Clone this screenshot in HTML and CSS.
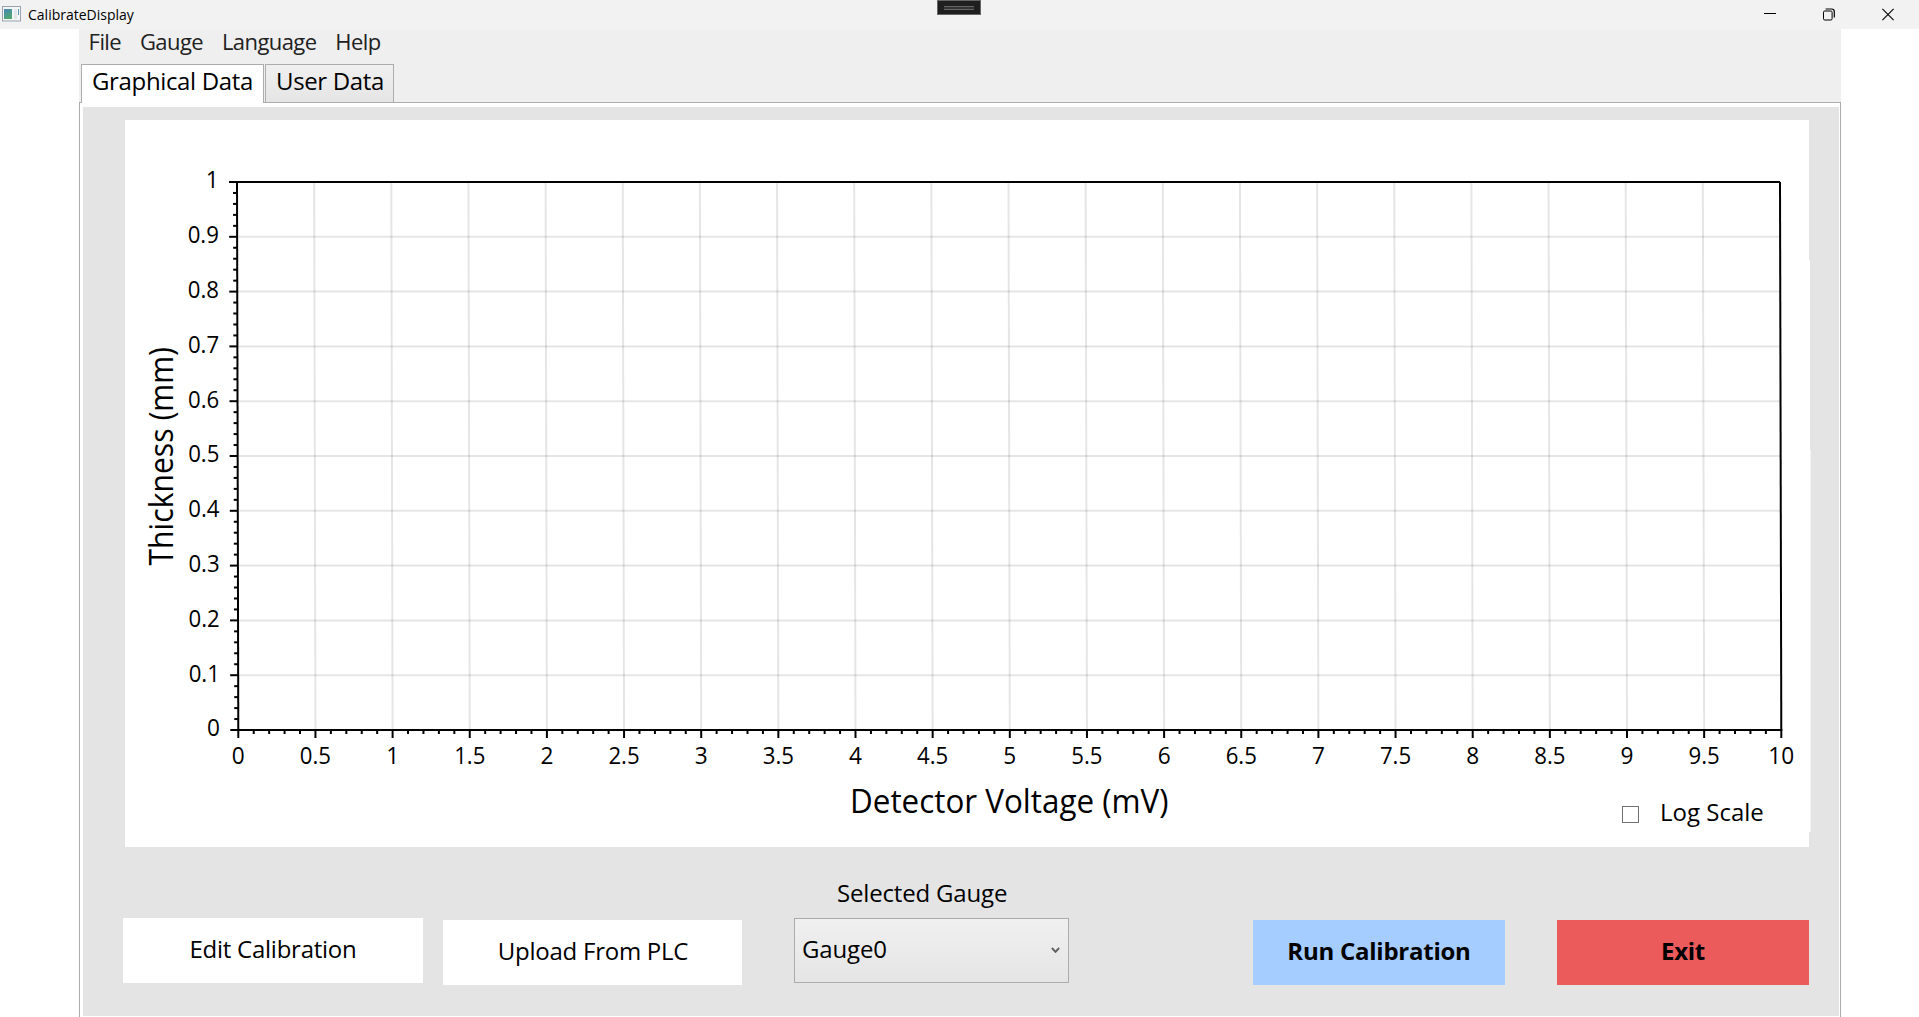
FILE: index.html
```html
<!DOCTYPE html>
<html lang="en">
<head>
<meta charset="utf-8">
<title>CalibrateDisplay</title>
<link rel="stylesheet" href="styles.css">
</head>
<body>
<header class="titlebar">
  <svg class="app-icon" width="19" height="16" viewBox="0 0 19 16">
    <defs><linearGradient id="pane" x1="0" y1="0" x2="0.4" y2="1"><stop offset="0" stop-color="#4a86b8"/><stop offset="1" stop-color="#4fa870"/></linearGradient></defs>
    <rect x="0.5" y="0.5" width="18" height="14.5" fill="#f4f5f6" stroke="#9aa3ab"/>
    <rect x="2" y="3" width="8" height="10" fill="url(#pane)"/>
    <rect x="12" y="3" width="3" height="10" fill="#e3e7ea"/>
    <rect x="16" y="3" width="1" height="6" fill="#5b97b5"/>
  </svg>
  <span class="app-title">CalibrateDisplay</span>
  <div class="window-buttons">
    <svg width="12" height="13" viewBox="0 0 12 13"><path d="M0 5.5H12" stroke="#000"/></svg>
    <svg width="12" height="13" viewBox="0 0 12 13" fill="none" stroke="#000"><rect x="0.5" y="3" width="8.6" height="9" rx="1.2"/><path d="M2.6 1H8.6Q11.3 1 11.3 3.7V9.6" stroke-width="1.2"/></svg>
    <svg width="12" height="13" viewBox="0 0 12 13"><path d="M.4 .9L11.6 12.1M11.6 .9L.4 12.1" stroke="#000" stroke-width="1.1"/></svg>
  </div>
  <div class="grip"><div class="grip-bar"></div></div>
</header>

<main class="app">
  <nav class="menu"><span>File</span><span>Gauge</span><span>Language</span><span>Help</span></nav>
  <div class="tabs">
    <div class="tab tab-active">Graphical Data</div>
    <div class="tab tab-idle">User Data</div>
  </div>
  <section class="page">
    <div class="page-body">
      <div class="chart-panel">
        <svg class="chart" id="chart" width="1684" height="727" viewBox="125 120 1684 727"></svg>
        <label class="log-scale"><span class="checkbox"></span><span>Log Scale</span></label>
      </div>
      <div class="footer">
        <button class="btn btn-edit">Edit Calibration</button>
        <button class="btn btn-upload">Upload From PLC</button>
        <div class="picker">
          <div class="picker-label">Selected Gauge</div>
          <div class="combo"><span>Gauge0</span>
            <svg width="9" height="7" viewBox="0 0 9 7"><path d="M.9 1L4.5 4.9L8.1 1" fill="none" stroke="#606060" stroke-width="1.9"/></svg>
          </div>
        </div>
        <button class="btn btn-run">Run Calibration</button>
        <button class="btn btn-exit">Exit</button>
      </div>
    </div>
  </section>
</main>
<script src="chart.js"></script>
</body>
</html>
```
FILE: styles.css
```css
* { box-sizing: border-box; }

body {
  margin: 0;
  height: 1017px;
  overflow: hidden;
  background: #fff;
  color: #000;
  font: 24px/31px "Open Sans", "Noto Sans", sans-serif;
}

.titlebar {
  position: relative;
  display: flex;
  align-items: center;
  height: 29px;
  padding: 0 25px 0 2px;
  background: #f2f2f2;
}

.app-icon { margin-bottom: 1px; }

.app-title {
  margin-left: 7px;
  font-size: 14px;
  line-height: 29px;
}

.window-buttons {
  display: flex;
  gap: 47px;
  margin-left: auto;
  margin-bottom: 1px;
}

.grip {
  position: absolute;
  left: 937px;
  top: 0;
  width: 44px;
  height: 15px;
  padding: 5px 6px 0;
  border: 1px solid #666;
  background: #1f1f1f;
}

.grip-bar {
  height: 4px;
  border: solid #666;
  border-width: 1px 0;
  background: #333;
}

.app {
  display: flex;
  flex-direction: column;
  width: 1762px;
  height: 988px;
  margin-left: 79px;
  background: #efefef;
}

.menu {
  display: flex;
  gap: 18.8px;
  height: 35px;
  padding-left: 9.6px;
  color: #212121;
  font-size: 22px;
  line-height: 25px;
  letter-spacing: -0.57px;
}

.tabs {
  display: flex;
  align-items: flex-start;
  gap: 1px;
  height: 38px;
  padding-left: 2px;
  letter-spacing: -0.35px;
}

.tab {
  position: relative;
  border: 1px solid #acacac;
  border-bottom: 0;
  white-space: nowrap;
}

.tab-active {
  width: 183px;
  height: 39px;
  padding-left: 10px;
  background: #fff;
}

.tab-idle {
  width: 129px;
  height: 38px;
  padding-left: 10px;
  background: linear-gradient(#f0f0f0, #e5e5e5);
}

.page {
  flex: 1;
  padding: 4px 1px 1px 3px;
  border: 1px solid #acacac;
  border-bottom: 0;
  background: #fff;
}

.page-body {
  height: 909px;
  padding: 13px 0 0 40px;
  background: #e4e4e4;
}

.chart-panel {
  position: relative;
  width: 1684px;
  height: 727px;
  margin-left: 2px;
  background: #fff;
}

.chart {
  display: block;
  overflow: visible;
}

.log-scale {
  position: absolute;
  left: 1497px;
  top: 676px;
  display: flex;
  align-items: center;
  gap: 21px;
}

.checkbox {
  width: 17px;
  height: 17px;
  margin-top: 5px;
  border: 1px solid #707070;
  background: #fff;
}

.footer {
  display: flex;
  align-items: flex-end;
  height: 138px;
}

.btn {
  height: 65px;
  padding: 0 0 4px;
  border: 0;
  background: #fff;
  color: #000;
  font: inherit;
  letter-spacing: -0.25px;
}

.btn-edit {
  width: 300px;
  margin: 0 20px 2px 0;
}

.btn-upload {
  width: 299px;
  padding-left: 1px;
}

.picker {
  width: 275px;
  margin: 0 184px 2px 52px;
}

.picker-label {
  padding: 0 0 10px 43px;
  letter-spacing: -0.17px;
}

.combo {
  display: flex;
  align-items: center;
  justify-content: space-between;
  height: 65px;
  padding: 0 8px 4px 7px;
  border: 1px solid #acacac;
  background: linear-gradient(#f0f0f0, #e5e5e5);
  letter-spacing: -0.15px;
}

.combo svg { margin-top: 3px; }

.btn-run {
  width: 252px;
  margin-right: 52px;
  background: #a5cdff;
  font-weight: 700;
}

.btn-exit {
  width: 252px;
  background: #eb5b5b;
  font-weight: 700;
}

.tick-label { font-size: 24px; }
.axis-title { font-size: 32px; }
```
FILE: chart.js
```javascript
const svg = document.getElementById('chart');
const NS = 'http://www.w3.org/2000/svg';

function add(name, attrs, text) {
  const el = document.createElementNS(NS, name);
  for (const key in attrs) el.setAttribute(key, attrs[key]);
  if (text) el.textContent = text;
  svg.appendChild(el);
}

function line(x1, y1, x2, y2, stroke) {
  add('line', { x1, y1, x2, y2, stroke: stroke || '#000', 'stroke-width': 2 });
}

function label(text, x, y, anchor) {
  const length = [...text].reduce((sum, c) => sum + (c === '.' ? 5.3 : 12.95), 0);
  add('text', {
    x, y, class: 'tick-label', 'text-anchor': anchor,
    textLength: length, lengthAdjust: 'spacingAndGlyphs'
  }, text);
}

const yTop = 182, yBottom = 730, plotWidth = 1543;
const leftAt = y => 237 + 1.3 * (y - yTop) / (yBottom - yTop);

add('rect', { x: 1809, y: 260, width: 1, height: 572, fill: '#fff' });
add('rect', { x: 1810, y: 450, width: 1, height: 382, fill: '#f3f3f3' });

// Grid lines
const grid = 'rgba(0,0,0,0.1)';
for (let i = 1; i < 20; i++) {
  const dx = plotWidth * i / 20;
  line(237 + dx, yTop, 238.3 + dx, yBottom, grid);
}
for (let i = 1; i < 10; i++) {
  const y = yBottom - 54.8 * i;
  line(leftAt(y), y, leftAt(y) + plotWidth, y, grid);
}

// Plot frame
line(236, yTop, 237 + plotWidth, yTop);
line(237, yTop, 238.3, yBottom);
line(237 + plotWidth, yTop, 238.3 + plotWidth, yBottom);
line(237, yBottom, 239.3 + plotWidth, yBottom);

// Thickness axis
for (let i = 0; i <= 50; i++) {
  const y = yBottom - 10.96 * i;
  const x = leftAt(y);
  line(x - (i % 5 ? 4 : 8), y, x, y);
  if (i % 5 === 0) label(String(i / 50), x - 18.3, y + 6.3, 'end');
}

// Voltage axis
for (let i = 0; i <= 100; i++) {
  const x = 238.3 + plotWidth * i / 100;
  line(x, yBottom, x, yBottom + (i % 5 ? 4 : 8));
  if (i % 5 === 0) label(String(i / 10), x, 764, 'middle');
}

add('text', { x: 850, y: 812.5, class: 'axis-title', textLength: 318.5, lengthAdjust: 'spacingAndGlyphs' }, 'Detector Voltage (mV)');
add('text', { transform: 'translate(173 565.5) rotate(-90)', class: 'axis-title', textLength: 218.5, lengthAdjust: 'spacingAndGlyphs' }, 'Thickness (mm)');
```
